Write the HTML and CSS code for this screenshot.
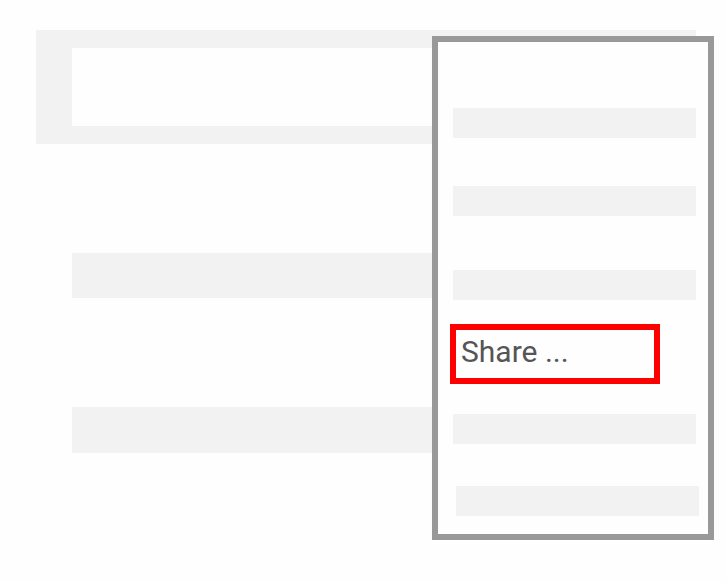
FILE: index.html
```html
<!DOCTYPE html>
<html>
<head>
<meta charset="utf-8">
<link rel="stylesheet" href="styles.css">
</head>
<body>
<div class="page">
  <div class="header"><div class="header-inner"></div></div>
  <div class="row row-first"></div>
  <div class="row row-second"></div>
</div>
<div class="menu">
  <div class="item i1"></div>
  <div class="item i2"></div>
  <div class="item i3"></div>
  <div class="share">Share ...</div>
  <div class="item i5"></div>
  <div class="item i6"></div>
</div>
</body>
</html>
```
FILE: styles.css
```css
html, body {
  margin: 0;
  padding: 0;
  background: #fefefe;
  width: 726px;
  height: 582px;
  overflow: hidden;
  font-family: Roboto, "Liberation Sans", sans-serif;
}
.page {
  padding: 30px 30px 0 36px;
}
.header {
  background: #f2f2f2;
  width: 660px;
  padding: 18px 36px;
  box-sizing: border-box;
}
.header-inner {
  background: #fefefe;
  height: 78px;
}
.row {
  background: #f2f2f2;
  margin-left: 36px;
  width: 588px;
}
.row-first {
  margin-top: 109px;
  height: 45px;
}
.row-second {
  margin-top: 109px;
  height: 46px;
}
.menu {
  position: absolute;
  left: 432px;
  top: 36px;
  width: 282px;
  height: 504px;
  box-sizing: border-box;
  border: 6px solid #999999;
  background: #fefefe;
  padding: 66px 0 0 15px;
  display: flex;
  flex-direction: column;
}
.item {
  background: #f2f2f2;
  width: 243px;
  height: 30px;
  flex: none;
}
.i2 { margin-top: 48px; }
.i3 { margin-top: 54px; }
.share {
  margin-top: 24px;
  margin-left: -3px;
  width: 210px;
  height: 60px;
  box-sizing: border-box;
  border: 6px solid #ff0000;
  padding-left: 5px;
  font-size: 30px;
  line-height: 44px;
  color: #555555;
  flex: none;
}
.i5 { margin-top: 30px; }
.i6 { margin-top: 42px; margin-left: 3px; }
```
